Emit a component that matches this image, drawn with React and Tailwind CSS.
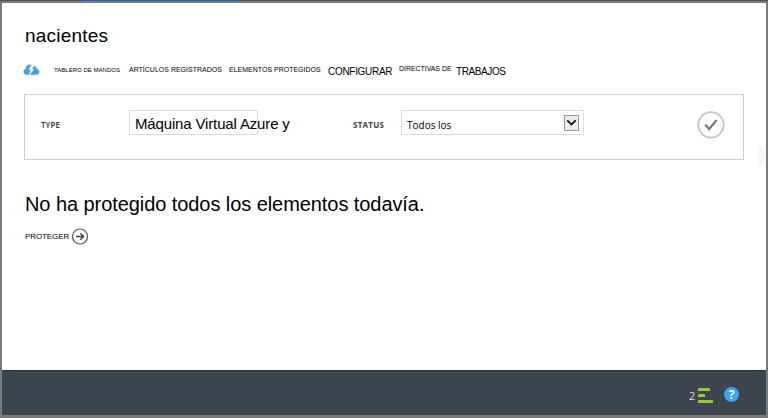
import React from "react";

const tabs = [
  { label: "TABLERO DE MANDOS", cls: "ml-[14px] w-[75px] text-[6px] leading-[8px] pt-[4px] tracking-[0.03px]" },
  { label: "ARTÍCULOS REGISTRADOS", cls: "w-[100px] text-[7px] leading-[8px] pt-[4px]" },
  { label: "ELEMENTOS PROTEGIDOS", cls: "w-[99px] text-[7px] leading-[8px] pt-[4px]" },
  { label: "CONFIGURAR", cls: "w-[71px] text-[10px] leading-[12px] pt-[4px] tracking-[-0.3px]" },
  { label: "DIRECTIVAS DE", cls: "w-[57px] text-[7px] leading-[8px] pt-[3px] tracking-[-0.05px]" },
  { label: "TRABAJOS", cls: "text-[10px] leading-[12px] pt-[4px] tracking-[-0.4px]" },
];

function CloudIcon() {
  return (
    <svg className="mt-[2px] h-[12px] w-[17px] shrink-0" viewBox="0 0 17 12">
      <path
        d="M4 10.7C1.9 10.7.5 9.7.5 7.8c0-1.5.9-2.5 2.1-2.8C2.5 2.4 4.4.6 6.8.6c1.6 0 2.7.7 3.4 1.8 2-.6 3.6.6 3.8 2.6 1.5.2 2.4 1.3 2.4 2.8 0 1.8-1.2 2.9-3 2.9Z"
        fill="#4b9edb"
      />
      <path d="M9 .4 5.4 5.6h2.1L6 11.4 11.4 5H9L10.8 1.6Z" fill="#fff" />
    </svg>
  );
}

function Header() {
  return (
    <header>
      <h1 className="ml-[23px] pt-[21px] text-[19px] leading-[24px] tracking-[0.2px]">nacientes</h1>
      <nav className="mt-[14px] ml-[21px] flex h-[23px] items-start whitespace-nowrap">
        <CloudIcon />
        {tabs.map((t) => (
          <a key={t.label} className={`block shrink-0 ${t.cls}`}>{t.label}</a>
        ))}
      </nav>
    </header>
  );
}

function Filters() {
  return (
    <section className="mt-[9px] ml-[22px] flex h-[66px] w-[720px] items-start border border-[#cdcdcd] pt-[15px]">
      <span className="ml-[16px] w-[88px] pt-[9px] font-['Open_Sans',sans-serif] text-[8px] leading-[11px] font-semibold tracking-[0.1px] text-[#333]">
        TYPE
      </span>
      <div className="h-[25px] w-[129px] border border-[#dcdcdc] pl-[5px] text-[15px] leading-[26px] tracking-[-0.15px] whitespace-nowrap">
        Máquina Virtual Azure y
      </div>
      <span className="ml-[95px] w-[48px] pt-[9px] font-['Open_Sans',sans-serif] text-[8px] leading-[11px] font-bold tracking-[0.25px] text-[#444]">
        STATUS
      </span>
      <div className="flex h-[25px] w-[183px] items-start justify-between border border-[#dcdcdc] pr-[4px] pl-[5px] font-['Open_Sans',sans-serif] text-[10px] leading-[29px]">
        <span>Todos los</span>
        <span className="mt-[4px] flex h-[16px] w-[15px] items-center justify-center border border-[#989898] bg-[#ececec]">
          <svg className="h-[8px] w-[11px]" viewBox="0 0 11 8">
            <path d="M1.3 1.3 5.5 5.5 9.7 1.3" fill="none" stroke="#111" strokeWidth="1.8" />
          </svg>
        </span>
      </div>
      <svg className="ml-[113px] h-[30px] w-[28px]" viewBox="0 0 28 30">
        <circle cx="14" cy="14.8" r="12.7" fill="#fff" stroke="#c4c4c4" strokeWidth="1.8" />
        <path d="m8.2 14.8 4 4.2 7.4-8.9" fill="none" stroke="#747474" strokeWidth="2.2" />
      </svg>
    </section>
  );
}

function EmptyState() {
  return (
    <section className="ml-[23px] pt-[32px]">
      <h2 className="text-[20px] leading-[24px] tracking-[-0.07px]">No ha protegido todos los elementos todavía.</h2>
      <div className="mt-[12px] flex h-[16px] items-center text-[8px] leading-[10px] tracking-[-0.1px]">
        <span className="w-[46px] pt-[2px]">PROTEGER</span>
        <svg className="h-[17px] w-[17px] shrink-0" viewBox="0 0 17 17">
          <circle cx="9" cy="8.5" r="7.5" fill="none" stroke="#555" strokeWidth="1.2" />
          <path d="M5 8.5h7.3M9.3 5.3 12.5 8.5l-3.2 3.2" fill="none" stroke="#444" strokeWidth="1.5" />
        </svg>
      </div>
    </section>
  );
}

function Footer() {
  return (
    <footer className="flex h-[45px] items-start border-t border-[#2b3642] bg-[#3e454f]">
      <span className="ml-[687px] w-[9px] pt-[18px] font-['Open_Sans',sans-serif] text-[11px] leading-[14px] text-[#d6d9dc]">2</span>
      <div className="mt-[17px] flex w-[15px] flex-col gap-[3px]">
        <i className="h-[3px] w-[12px] bg-[#8fcb2e]" />
        <i className="h-[3px] w-[7px] bg-[#8fcb2e]" />
        <i className="h-[3px] w-[15px] bg-[#8fcb2e]" />
      </div>
      <span className="mt-[16px] ml-[11px] flex h-[15px] w-[15px] items-center justify-center rounded-full bg-[#39a3f4] font-['Open_Sans',sans-serif] text-[13px] leading-[15px] font-bold text-white">
        ?
      </span>
    </footer>
  );
}

export default function App() {
  return (
    <div className="flex h-[418px] w-[768px] flex-col overflow-hidden bg-[#7a7a7a] font-['Liberation_Sans',Arial,sans-serif] text-black">
      <div className="h-px shrink-0 bg-[#4a4f5a]">
        <div className="ml-[82px] h-px w-[158px] bg-[#1266bd]" />
      </div>
      <div className="mt-[2px] ml-[2px] flex h-[412px] w-[764px] shrink-0 flex-col bg-white">
        <div className="flex h-[367px] items-start">
          <main className="w-[756px] shrink-0">
            <Header />
            <Filters />
            <EmptyState />
          </main>
          <div className="mt-[144px] h-[18px] w-[7px] bg-[#f5f9ff]" />
        </div>
        <Footer />
      </div>
    </div>
  );
}
